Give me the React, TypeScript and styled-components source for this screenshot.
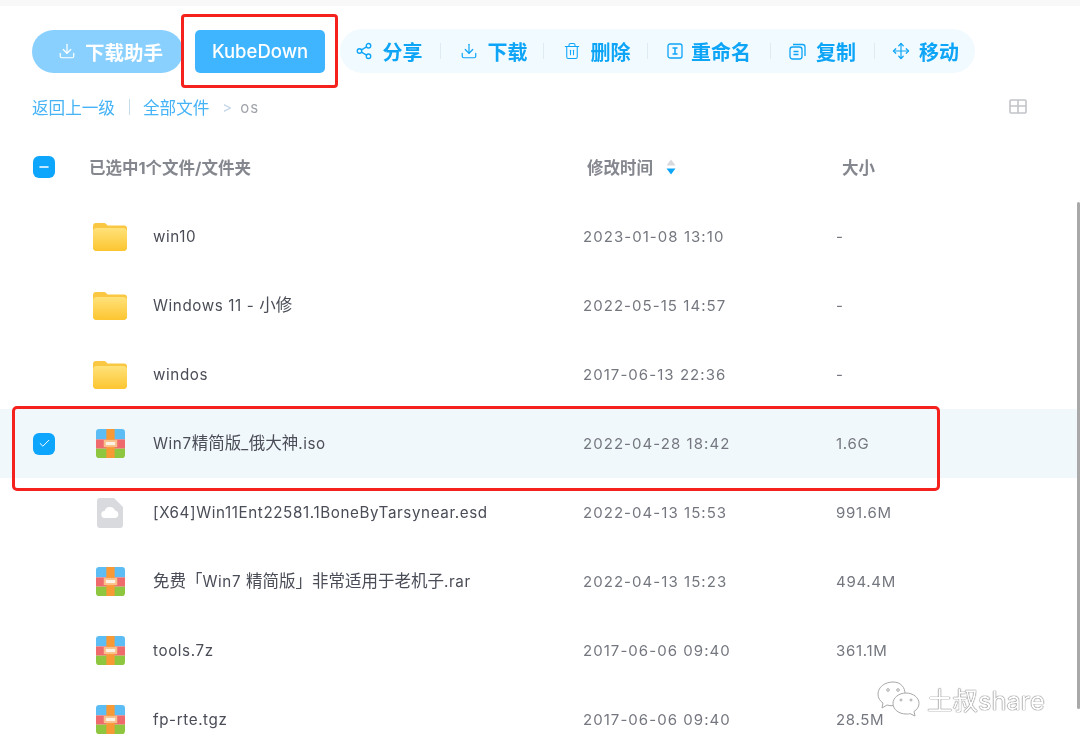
import React from "react";
import styled, { createGlobalStyle } from "styled-components";
import { Download, Share2, Trash2, Move, Check, Minus } from "lucide-react";

const GlobalStyle = createGlobalStyle`
  html, body {
    margin: 0;
    padding: 0;
    background: #fff;
    overflow: hidden;
  }
  * {
    box-sizing: border-box;
  }
`;

const Page = styled.div`
  position: relative;
  width: 1080px;
  height: 744px;
  overflow: hidden;
  background: #fff;
  font-family: "Inter", "Noto Sans CJK SC", sans-serif;
  filter: blur(0.35px);
`;

const TopStrip = styled.div`
  height: 6px;
  background: #f8f8f8;
`;

const Toolbar = styled.div`
  display: flex;
  align-items: center;
  height: 44px;
  margin-top: 23px;
  padding-left: 32px;
`;

const HelperButton = styled.div`
  display: flex;
  align-items: center;
  justify-content: center;
  gap: 9px;
  width: 151px;
  height: 43px;
  padding-left: 6px;
  border-radius: 22px;
  background: #8ad0fe;
  color: #fff;
  font-size: 19.5px;
  font-weight: 700;
`;

const KubeWrap = styled.div`
  position: relative;
  margin-left: 12px;
`;

const KubeButton = styled.div`
  display: flex;
  align-items: center;
  justify-content: center;
  width: 130px;
  height: 43px;
  border-radius: 5px;
  background: #40b5ff;
  color: #fff;
  font-size: 18.5px;
  font-weight: 500;
`;

const KubeHighlight = styled.div`
  position: absolute;
  top: -16px;
  bottom: -15px;
  left: -14px;
  right: -13px;
  border: 3px solid #f5211d;
  border-radius: 4px;
`;

const ActionBar = styled.div`
  display: flex;
  align-items: center;
  width: 635px;
  height: 44px;
  margin-left: 15px;
  padding-left: 15px;
  border-radius: 22px;
  background: #f1faff;
`;

const Action = styled.div<{ $gap?: number }>`
  display: flex;
  align-items: center;
  gap: ${({ $gap }) => $gap ?? 9.5}px;
  color: #0ea5f7;
  font-size: 20px;
  font-weight: 700;
  white-space: nowrap;
`;

const ActionDivider = styled.span<{ $left: number; $right: number }>`
  width: 1px;
  height: 16px;
  margin: 0 ${({ $right }) => $right}px 0 ${({ $left }) => $left}px;
  background: #dfeaf2;
`;

const Breadcrumb = styled.div`
  position: relative;
  display: flex;
  align-items: center;
  height: 22px;
  margin-top: 23px;
  padding-left: 32px;
  font-size: 16.6px;
`;

const CrumbLink = styled.span`
  color: #45b3f6;
`;

const CrumbDivider = styled.span`
  width: 1px;
  height: 16px;
  margin: 0 13px 0 14px;
  background: #c6dcea;
`;

const CrumbArrow = styled.span`
  margin: 0 8px 0 13px;
  color: #c4d6e6;
  font-size: 15px;
`;

const CrumbCurrent = styled.span`
  color: #a0a3aa;
  font-size: 15px;
  letter-spacing: 1px;
`;

const ViewSwitch = styled.svg`
  position: absolute;
  right: 53px;
  top: 3px;
`;

const HeaderRow = styled.div`
  display: grid;
  grid-template-columns: 56px 498px 255px 1fr;
  align-items: center;
  height: 40px;
  margin-top: 29px;
  padding-left: 33px;
  color: #85878f;
  font-size: 16.5px;
  font-weight: 700;
`;

const HeaderCell = styled.div<{ $gap?: number }>`
  display: flex;
  align-items: center;
  gap: ${({ $gap }) => $gap ?? 0}px;
  white-space: nowrap;
`;

const CheckBox = styled.div`
  display: flex;
  align-items: center;
  justify-content: center;
  width: 22px;
  height: 22px;
  border-radius: 6px;
  background: #0ea5fc;
  color: #fff;
`;

const SortArrows = styled.svg`
  display: block;
`;

const FileList = styled.div`
  margin-top: 15px;
`;

const FileRow = styled.div<{ $selected?: boolean }>`
  position: relative;
  display: grid;
  grid-template-columns: 60px 60px 430px 253px 1fr;
  align-items: center;
  height: 69px;
  padding-left: 33px;
  background: ${({ $selected }) => ($selected ? "#f1f8fc" : "transparent")};
  color: #74777f;
  font-size: 15px;
`;

const RowHighlight = styled.div`
  position: absolute;
  top: -3px;
  bottom: -13px;
  left: 12px;
  width: 928px;
  border: 3px solid #f5211d;
  border-radius: 5px;
`;

const IconCell = styled.div`
  display: flex;
  justify-content: center;
  width: 34px;
`;

const FileName = styled.div`
  color: #4a4d57;
  font-size: 15.2px;
  line-height: 20px;
  letter-spacing: 0.6px;
  white-space: nowrap;
`;

const Cjk = styled.span`
  font-size: 16.5px;
  line-height: 0;
  letter-spacing: 0;
`;

const Modified = styled.div`
  letter-spacing: 1.05px;
  white-space: nowrap;
`;

const Size = styled.div`
  letter-spacing: 0.7px;
  white-space: nowrap;
`;

const Scrollbar = styled.div`
  position: absolute;
  top: 202px;
  right: 0;
  width: 3px;
  height: 507px;
  border-radius: 2px;
  background: #a9a9a9;
`;

const Watermark = styled.div`
  position: absolute;
  left: 877px;
  top: 680px;
  display: flex;
  align-items: center;
  gap: 6px;
  color: #fff;
  font-size: 25.5px;
  text-shadow: 0 0 1px #555, 0 0 1px #555;
`;

const FolderIcon = () => (
  <svg width="34" height="29" viewBox="0 0 34 29">
    <defs>
      <linearGradient id="folder-front" x1="0" y1="0" x2="0" y2="1">
        <stop offset="0" stopColor="#ffe27a" />
        <stop offset="1" stopColor="#fcc530" />
      </linearGradient>
    </defs>
    <path d="M0 4a3 3 0 0 1 3-3h8c1.600 0 2.300 1.200 3.500 2.500H31a3 3 0 0 1 3 3V25a4 4 0 0 1-4 4H4a4 4 0 0 1-4-4z" fill="#fac743" />
    <rect y="6" width="34" height="23" rx="4" fill="url(#folder-front)" />
  </svg>
);

const ArchiveIcon = () => (
  <svg width="29" height="29" viewBox="0 0 28 28">
    <clipPath id="archive-shape">
      <rect width="28" height="28" rx="3" />
    </clipPath>
    <g clipPath="url(#archive-shape)">
      <rect width="28" height="10" fill="#5cbdf4" />
      <rect y="10" width="28" height="9" fill="#ef6a6c" />
      <rect y="19" width="28" height="9" fill="#8ec63f" />
      <rect x="10" width="8" height="28" fill="#f79a36" />
    </g>
    <rect x="7.5" y="10.500" width="13" height="7" fill="#f9c08a" />
    <rect x="9.5" y="12.500" width="9" height="3" fill="#fdf3e4" />
  </svg>
);

const CloudFileIcon = () => (
  <svg width="26" height="30" viewBox="0 0 26 30">
    <path d="M3 0h14l9 9v18a3 3 0 0 1-3 3H3a3 3 0 0 1-3-3V3a3 3 0 0 1 3-3z" fill="#d9dadd" />
    <path d="M8 20a3.500 3.500 0 0 1-.4-7A5.500 5.500 0 0 1 18 12.500a3.800 3.800 0 0 1 .2 7.500z" fill="#fff" />
  </svg>
);

const RenameIcon = () => (
  <svg width="16" height="16" viewBox="0 0 16 16" fill="none" stroke="#0ea5f7" strokeWidth="1.3">
    <rect x="1" y="1" width="14" height="14" rx="2" />
    <path d="M5.500 5h5M5.500 11h5M8 5v6" strokeWidth="1.5" />
  </svg>
);

const CopyIcon = () => (
  <svg width="17" height="17" viewBox="0 0 17 17" fill="none" stroke="#0ea5f7" strokeWidth="1.3">
    <rect x="1" y="4" width="12" height="12" rx="2.500" />
    <path d="M4 1.500h9.500a2.500 2.500 0 0 1 2.500 2.500v9" />
    <path d="M4.500 8.500h5M4.500 11.500h5" strokeWidth="1.5" />
  </svg>
);

const WeChatIcon = () => (
  <svg width="44" height="36" viewBox="0 0 44 36" fill="#fff" stroke="#a8a8a8" strokeWidth="1">
    <path d="M16 1C8 1 1 6 1 13c0 4 2 7 5 9l-1 5 5-3c2 .6 4 .8 6 .7C32 24 32 1 16 1z" />
    <path d="M29 12c-7 0-13 4.500-13 10.500S22 33 29 33c2 0 3 0 4-.4l5 2.400-1-4.500c3-2 5-4.500 5-8 0-6-6-10.500-13-10.500z" />
    <circle cx="11" cy="9" r="1.300" />
    <circle cx="21" cy="9" r="1.300" />
    <circle cx="24" cy="19" r="1" />
    <circle cx="34" cy="19" r="1" />
  </svg>
);

type FileItem = {
  name: string;
  time: string;
  size: string;
  kind: "folder" | "archive" | "cloud";
  selected?: boolean;
};

const files: FileItem[] = [
  { name: "win10", time: "2023-01-08 13:10", size: "-", kind: "folder" },
  { name: "Windows 11 - 小修", time: "2022-05-15 14:57", size: "-", kind: "folder" },
  { name: "windos", time: "2017-06-13 22:36", size: "-", kind: "folder" },
  { name: "Win7精简版_俄大神.iso", time: "2022-04-28 18:42", size: "1.6G", kind: "archive", selected: true },
  { name: "[X64]Win11Ent22581.1BoneByTarsynear.esd", time: "2022-04-13 15:53", size: "991.6M", kind: "cloud" },
  { name: "免费「Win7 精简版」非常适用于老机子.rar", time: "2022-04-13 15:23", size: "494.4M", kind: "archive" },
  { name: "tools.7z", time: "2017-06-06 09:40", size: "361.1M", kind: "archive" },
  { name: "fp-rte.tgz", time: "2017-06-06 09:40", size: "28.5M", kind: "archive" },
];

const iconFor = (kind: FileItem["kind"]) => {
  if (kind === "folder") return <FolderIcon />;
  if (kind === "cloud") return <CloudFileIcon />;
  return <ArchiveIcon />;
};

// chinese glyphs run larger than the latin ones in the file names
const renderName = (name: string) =>
  name.split(/([\u3000-\u9fff]+)/).map((part, i) =>
    i % 2 === 1 ? <Cjk key={i}>{part}</Cjk> : part
  );

const App = () => {
  return (
    <Page>
      <GlobalStyle />
      <TopStrip />
      <Toolbar>
        <HelperButton>
          <Download size={18} strokeWidth={1.6} />
          下载助手
        </HelperButton>
        <KubeWrap>
          <KubeButton>KubeDown</KubeButton>
          <KubeHighlight />
        </KubeWrap>
        <ActionBar>
          <Action>
            <Share2 size={18} strokeWidth={1.8} />
            分享
          </Action>
          <ActionDivider $left={17.5} $right={19} />
          <Action>
            <Download size={18} strokeWidth={1.6} />
            下载
          </Action>
          <ActionDivider $left={15.5} $right={19} />
          <Action>
            <Trash2 size={18} strokeWidth={1.4} />
            删除
          </Action>
          <ActionDivider $left={16.5} $right={19} />
          <Action $gap={8}>
            <RenameIcon />
            重命名
          </Action>
          <ActionDivider $left={19} $right={18} />
          <Action $gap={10}>
            <CopyIcon />
            复制
          </Action>
          <ActionDivider $left={18} $right={17} />
          <Action $gap={9}>
            <Move size={18} strokeWidth={1.6} />
            移动
          </Action>
        </ActionBar>
      </Toolbar>
      <Breadcrumb>
        <CrumbLink>返回上一级</CrumbLink>
        <CrumbDivider />
        <CrumbLink>全部文件</CrumbLink>
        <CrumbArrow>&gt;</CrumbArrow>
        <CrumbCurrent>os</CrumbCurrent>
        <ViewSwitch width="18" height="15" viewBox="0 0 18 15" fill="none" stroke="#c2c4c9" strokeWidth="1.6">
          <rect x="1" y="1" width="16" height="13" rx="1" />
          <path d="M1 7h16M9 1v13" />
        </ViewSwitch>
      </Breadcrumb>
      <HeaderRow>
        <CheckBox>
          <Minus size={14} strokeWidth={2.4} />
        </CheckBox>
        <HeaderCell>已选中1个文件/文件夹</HeaderCell>
        <HeaderCell $gap={13}>
          修改时间
          <SortArrows width="10" height="16" viewBox="0 0 10 16">
            <path d="M5 0.500 9.500 6.500H.5z" fill="#d6d8dc" />
            <path d="M5 15.500 .5 9.500h9z" fill="#0ea5f7" />
          </SortArrows>
        </HeaderCell>
        <HeaderCell>大小</HeaderCell>
      </HeaderRow>
      <FileList>
        {files.map((file) => (
          <FileRow key={file.name} $selected={file.selected}>
            {file.selected ? (
              <CheckBox>
                <Check size={13} strokeWidth={1.8} />
              </CheckBox>
            ) : (
              <span />
            )}
            <IconCell>{iconFor(file.kind)}</IconCell>
            <FileName>{renderName(file.name)}</FileName>
            <Modified>{file.time}</Modified>
            <Size>{file.size}</Size>
            {file.selected && <RowHighlight />}
          </FileRow>
        ))}
      </FileList>
      <Scrollbar />
      <Watermark>
        <WeChatIcon />
        土叔share
      </Watermark>
    </Page>
  );
};

export default App;
